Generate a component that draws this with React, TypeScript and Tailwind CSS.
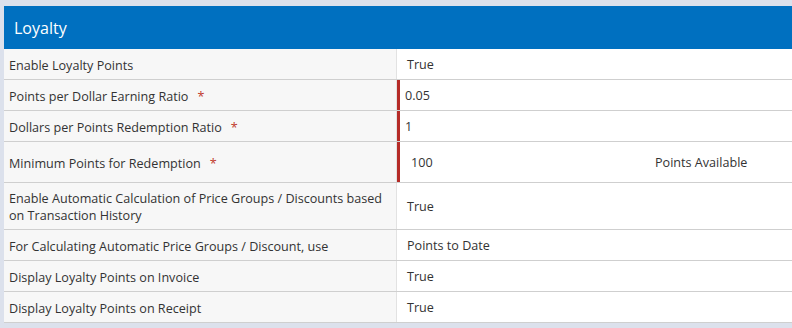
import { ReactNode } from "react";

type Row = {
  label: ReactNode;
  value: ReactNode;
  required?: boolean;
  h: string;
};

const rows: Row[] = [
  { label: "Enable Loyalty Points", value: "True", h: "h-[31px]" },
  { label: "Points per Dollar Earning Ratio", value: "0.05", required: true, h: "h-[31px]" },
  { label: "Dollars per Points Redemption Ratio", value: "1", required: true, h: "h-[31px]" },
  {
    label: "Minimum Points for Redemption",
    value: (
      <div className="flex w-full items-center">
        <span className="w-[250px] pl-[6px]">100</span>
        <span>Points Available</span>
      </div>
    ),
    required: true,
    h: "h-[41px]",
  },
  {
    label: (
      <>
        Enable Automatic Calculation of Price Groups / Discounts based
        <br />
        on Transaction History
      </>
    ),
    value: "True",
    h: "h-[47px]",
  },
  { label: "For Calculating Automatic Price Groups / Discount, use", value: "Points to Date", h: "h-[31px]" },
  { label: "Display Loyalty Points on Invoice", value: "True", h: "h-[31px]" },
  { label: "Display Loyalty Points on Receipt", value: "True", h: "h-[31px]" },
];

export default function App() {
  return (
    <div
      className="h-[328px] w-[792px] overflow-hidden bg-[#dce1ec] pl-[4px] pt-[6px] text-[12.6px] text-[#333]"
      style={{ fontFamily: '"Open Sans", "Liberation Sans", sans-serif' }}
    >
      <div className="flex h-[43px] items-center bg-[#0070c0] pl-[10px] pt-[1px] text-[16px] text-white">Loyalty</div>
      {rows.map((r, i) => (
        <div key={i} className={`flex border-b border-[#cfcfcf] ${r.h}`}>
          <div className="flex w-[393px] items-center border-r border-[#e2e2e2] bg-[#f7f7f7] pl-[5px] pt-[2px] leading-[17px]">
            <span>
              {r.label}
              {r.required && <span className="ml-[9px] text-[#c0392b]">*</span>}
            </span>
          </div>
          <div
            className={`flex flex-1 items-center bg-white pt-[2px] ${
              r.required ? "border-l-[3px] border-[#b52b27] pl-[5px]" : "pl-[10px]"
            }`}
          >
            {r.value}
          </div>
        </div>
      ))}
    </div>
  );
}
